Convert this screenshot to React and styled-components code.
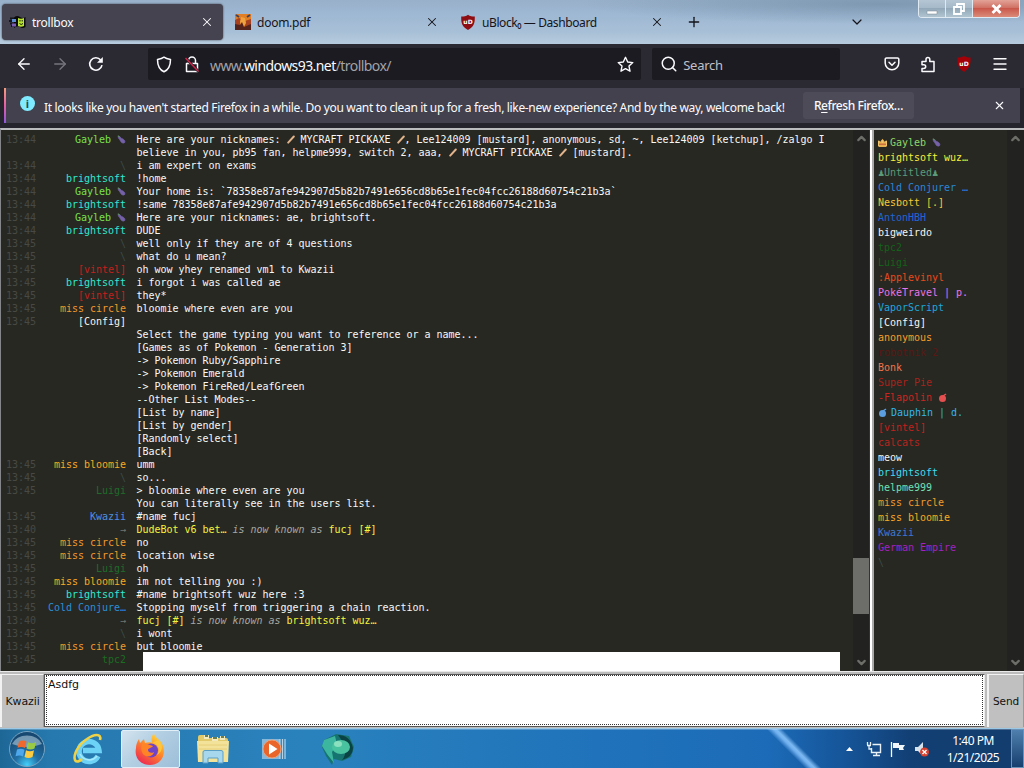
import React from 'react';
import styled, { createGlobalStyle, css } from 'styled-components';
import { ArrowLeft, ArrowRight, X, Plus, ChevronDown, ChevronUp, Search, Menu } from 'lucide-react';

const GlobalStyle = createGlobalStyle`
  * { box-sizing: border-box; }
  body {
    margin: 0;
    overflow: hidden;
    background: #2b2a33;
    font-family: "Noto Sans", "Open Sans", sans-serif;
  }
`;

const Screen = styled.div`
  width: 1024px;
  height: 768px;
  display: flex;
  flex-direction: column;
  overflow: hidden;
`;

/* ---------- tab strip ---------- */

const TabStrip = styled.div`
  height: 44px;
  display: flex;
  align-items: flex-start;
  padding: 4px 0 0 2px;
  background:
    radial-gradient(ellipse 300px 20px at 880px 4px, rgba(112, 139, 165, 0.65), transparent),
    linear-gradient(180deg, #98b0ca 0, #9fb8d3 35%, #a9c1d7 75%, #b7cbdd 100%);
`;

const Tab = styled.div`
  width: ${p => p.$width}px;
  height: 36px;
  flex: none;
  display: flex;
  align-items: center;
  padding: 0 9px 0 ${p => p.$pad || 7}px;
  margin-right: ${p => p.$gap || 0}px;
  border-radius: 4px;
  color: #15141a;
  ${p => p.$active && css`
    color: #fbfbfe;
    background: #45434f;
    box-shadow: 0 0 2px #33323c;
  `}
`;

const TabTitle = styled.span`
  flex: 1;
  margin-left: 6px;
  padding-top: 1px;
  font-size: 12px;
  letter-spacing: ${p => p.$ls || 0}px;
  white-space: nowrap;
`;

const StripIcon = styled.div`
  width: 16px;
  height: 36px;
  display: flex;
  align-items: center;
  justify-content: center;
  margin-left: ${p => p.$left}px;
  color: #15141a;
`;

const WindowButtons = styled.div`
  display: flex;
  width: 102px;
  height: 18px;
  margin: -4px 0 0 53px;
  border: 1px solid #dfe9f1;
  border-top: none;
  border-radius: 0 0 4px 4px;
  overflow: hidden;
`;

const WindowButton = styled.div`
  flex: none;
  width: ${p => p.$width}px;
  display: flex;
  align-items: center;
  justify-content: center;
  border-right: 1px solid #dfe9f1;
  background: ${p => p.$close
    ? 'linear-gradient(180deg, #e3a297 0, #d07265 45%, #c9584a 50%, #dc8b7a 100%)'
    : 'linear-gradient(180deg, #b5c5d3 0, #a6bac9 45%, #93a9b9 50%, #b0c4d0 100%)'};
`;

/* ---------- navigation bar ---------- */

const NavBar = styled.div`
  height: 44px;
  display: flex;
  align-items: center;
  padding: 0 15px 4px 15px;
  background: #2b2a33;
  color: #fbfbfe;
`;

const NavIcon = styled.div`
  width: 18px;
  height: 18px;
  flex: none;
  display: flex;
  align-items: center;
  justify-content: center;
  margin-right: ${p => p.$gap || 0}px;
  color: ${p => (p.$dim ? '#77767e' : '#fbfbfe')};
`;

const UrlField = styled.div`
  width: 494px;
  height: 32px;
  display: flex;
  align-items: center;
  padding: 0 7px;
  margin: 0 11px 0 43px;
  border-radius: 2px;
  background: #1c1b22;
`;

const Url = styled.span`
  flex: 1;
  margin-left: 9px;
  padding-top: 2px;
  font-size: 14px;
  letter-spacing: -0.57px;
  color: #a3a3a8;
  b { font-weight: 400; color: #fbfbfe; }
`;

const SearchField = styled.div`
  width: 188px;
  height: 32px;
  display: flex;
  align-items: center;
  padding-left: 8px;
  margin-right: 43px;
  border-radius: 2px;
  background: #1c1b22;
  color: #fbfbfe;
  span {
    margin-left: 5px;
    padding-top: 2px;
    font-size: 13px;
    letter-spacing: -0.3px;
    color: #c1c0c7;
  }
`;

/* ---------- notification ---------- */

const NoticeRow = styled.div`
  height: 40px;
  padding: 0 4px 5px 4px;
  background: #25242c;
`;

const Notice = styled.div`
  height: 35px;
  display: flex;
  align-items: center;
  padding-left: 14px;
  border-left: 2px solid;
  border-image: linear-gradient(180deg, #f5a07a, #e45fa4 50%, #8a55e0) 1;
  background: #42414d;
  color: #fbfbfe;
`;

const InfoDot = styled.div`
  width: 15px;
  height: 15px;
  flex: none;
  display: flex;
  align-items: center;
  justify-content: center;
  margin: -4px 9px 0 0;
  border-radius: 50%;
  background: #80ebff;
  color: #254a5c;
  font-size: 11px;
  font-weight: 700;
`;

const NoticeText = styled.span`
  width: 745px;
  flex: none;
  margin-right: 14px;
  padding-top: 3px;
  font-size: 12px;
  letter-spacing: -0.335px;
  white-space: nowrap;
`;

const RefreshButton = styled.div`
  width: 111px;
  height: 27px;
  flex: none;
  margin-right: 79px;
  border-radius: 3px;
  background: #4c4b57;
  font-size: 12px;
  font-weight: 500;
  line-height: 28px;
  letter-spacing: -0.42px;
  text-align: center;
  u { text-underline-offset: 2px; }
`;

/* ---------- chat ---------- */

const ChatArea = styled.div`
  height: 543px;
  display: flex;
  border-top: 2px solid #b9bbbd;
  border-left: 1px solid #84868a;
  background: #272822;
  font-family: "DejaVu Sans Mono", "Liberation Mono", monospace;
  font-size: 10px;
  letter-spacing: -0.02px;
  color: #f8f8f4;
`;

const Messages = styled.div`
  width: 852px;
  padding: 3px 0 0 5px;
  overflow: hidden;
`;

const Line = styled.div`
  height: 13px;
  display: flex;
  line-height: 13px;
  white-space: pre;
`;

const Time = styled.span`
  width: 31px;
  color: #484943;
`;

const Nick = styled.span`
  width: 89px;
  margin-right: 10.5px;
  display: flex;
  justify-content: flex-end;
  align-items: center;
  color: ${p => p.$color};
`;

const Yellow = styled.span`
  color: #f5f23c;
`;

const Em = styled.i`
  color: #a7a7a0;
`;

const HiddenMessage = styled.div`
  width: 697px;
  height: 19px;
  margin: -1px 0 0 6.5px;
  background: #fff;
`;

const Scrollbar = styled.div`
  width: ${p => p.$width}px;
  flex: none;
  display: flex;
  flex-direction: column;
  align-items: center;
  justify-content: space-between;
  padding: 2px 0 2px;
  background: #222320;
  color: #6d6e69;
`;

const Thumb = styled.div`
  width: 100%;
  height: 56px;
  flex: none;
  margin: 413px 0 auto;
  background: #6d6e6a;
`;

const UserList = styled.div`
  flex: 1;
  display: flex;
  flex-direction: column;
  padding: 5px 0 0 4px;
`;

const Divider = styled.div`
  width: 5px;
  background: linear-gradient(90deg, #33342f 0 1px, #fff 1px 3px, #aaa 3px 5px);
`;

const User = styled.div`
  height: 15px;
  display: flex;
  align-items: center;
  white-space: pre;
  line-height: 15px;
  color: ${p => p.$color};
`;

/* ---------- input ---------- */

const InputRow = styled.div`
  height: 57px;
  display: flex;
  padding: 2px 0 1px;
  border-top: 1px solid #e8e8e8;
  background: #bcbcbc;
  font-family: "DejaVu Sans", sans-serif;
  color: #111;
`;

const GreyButton = styled.div`
  width: ${p => p.$width}px;
  display: flex;
  align-items: center;
  justify-content: center;
  border-left: 2px solid #f2f2f2;
  border-top: 1px solid #f2f2f2;
  border-right: 1px solid #999;
  background: #c0c0c0;
  font-size: ${p => p.$size}px;
  letter-spacing: -0.1px;
`;

const TextBox = styled.div`
  flex: 1;
  margin-right: 2px;
  border: 1px solid #555;
  border-right-color: #eee;
  padding: 0 1px 1px;
  background: #fff;
`;

const TextInner = styled.div`
  height: 100%;
  padding: 2px 1px;
  border: 1px dotted #333;
  font-size: 11px;
  line-height: 13px;
`;

/* ---------- taskbar ---------- */

const Taskbar = styled.div`
  height: 40px;
  display: flex;
  align-items: center;
  border-top: 1px solid #9cc8e6;
  box-shadow: inset 0 1px 0 rgba(255, 255, 255, 0.25);
  background:
    linear-gradient(45deg, transparent 0 44%, rgba(122, 184, 245, 0.9) 48.5%, rgba(135, 195, 250, 0.9) 50.5%, transparent 55%) 740px 0 / 110px 40px no-repeat,
    linear-gradient(90deg, #1d6796 0, #2679ae 5%, #2a82bd 30%, #2277bb 50%, #1c6bb8 75%, #155396 83%, #123f74 89%, #123d6d 100%);
`;

const TaskItem = styled.div`
  width: ${p => p.$width}px;
  height: 38px;
  flex: none;
  display: flex;
  align-items: center;
  justify-content: center;
  ${p => p.$active && css`
    border: 1px solid #e2eff7;
    border-radius: 2px;
    background: linear-gradient(135deg, #d3e3ef, #b2cee2 45%, #9dbfd9);
  `}
`;

const Tray = styled.div`
  flex: 1;
  display: flex;
  align-items: center;
  justify-content: flex-end;
`;

const Clock = styled.div`
  width: 66px;
  margin: 0 5px 0 5px;
  color: #fff;
  font-size: 12px;
  line-height: 17px;
  letter-spacing: -0.5px;
  text-align: center;
  white-space: nowrap;
`;

const ShowDesktop = styled.div`
  width: 13px;
  height: 39px;
  border: 1px solid #6b93b8;
  background: linear-gradient(180deg, #4f7fae, #163f6e);
`;

const Eggplant = () => (
  <svg width="9" height="9" viewBox="0 0 9 9">
    <path d="M1.400 1.600c1.600-.200 2.200.8 3 1.800 1.400.3 3 1.400 3.400 2.800.3 1.400-.8 2.200-2 1.800C4.400 7.600 3.500 6.200 3 4.900 2 4 1 3 1.400 1.600z" fill="#7461a8" stroke="#7461a8" strokeWidth=".8" />
    <path d="M.8.800l1.800 1.200" stroke="#5f8c68" strokeWidth="1.200" />
  </svg>
);

const Stick = () => (
  <svg width="8" height="9" viewBox="0 0 8 9" style={{ verticalAlign: '-1px' }}>
    <path d="M1.200 7.600L6.800 1.500" stroke="#e2b48c" strokeWidth="2" strokeLinecap="round" />
  </svg>
);

const UserIcon = styled.svg`
  flex: none;
  margin-right: ${p => p.$pull || 0}px;
`;

const Crown = () => (
  <UserIcon $pull={-3} width="9" height="10" viewBox="0 0 9 10">
    <path d="M.5 2l1.800 1.700L4.500.8l2.200 2.900L8.500 2v7h-8z" fill="#e8b04e" />
    <path d="M.5 3v5M8.500 3v5M4.500 2v3" stroke="#efc46a" strokeWidth="1.600" />
    <path d="M1 6.200h7" stroke="#c3563f" />
  </UserIcon>
);

const Berry = ({ color, pull }) => (
  <UserIcon $pull={pull} width="10" height="10" viewBox="0 0 10 10">
    <circle cx="4.500" cy="5.500" r="3.500" fill={color} />
    <path d="M5 3l3-2" stroke={color} strokeWidth="1.500" />
  </UserIcon>
);

const UblockShield = () => (
  <svg width="16" height="17" viewBox="0 0 16 17">
    <path d="M8 .8c2 1.500 4 1.700 6.800 1.700C15 9.500 13.600 13 8 16 2.400 13 1 9.500 1.200 2.500 4 2.500 6 2.300 8 .8z" fill="#8e0d12" />
    <text x="8" y="9.500" fill="#fff" fontSize="6" fontWeight="700" textAnchor="middle" fontFamily="DejaVu Sans">uD</text>
  </svg>
);

const WinFavicon = () => (
  <svg width="17" height="15" viewBox="0 0 17 15">
    <path d="M5 2.500Q8 0 11 2t5.500 0v10q-3 2-5.500 0T5 13z" fill="#0b0b0b" />
    <path d="M1 3.500h4M0 6h4M1 8.500h4M2 11h4" stroke="#15151b" strokeWidth="1.800" />
    <path d="M3 4h4v3H3z" fill="#5b8ed0" /><path d="M3 8.500h4v3H3z" fill="#7a5fb5" />
    <path d="M9 3q3 1.500 6 0v8q-3 1.500-6 0z" fill="#b8e332" />
    <path d="M11 5v1.500M13.200 5v1.500M10.500 8.500q1.500 2 3.500 0" stroke="#17220a" fill="none" />
  </svg>
);

const DoomFavicon = () => (
  <svg width="16" height="16" viewBox="0 0 16 16">
    <path d="M0 0h16v16H0z" fill="#a8411f" />
    <path d="M0 0h16v5L10 7 4 4 0 6z" fill="#e07f26" />
    <path d="M6 3l4 1 1 5-2 4H6l-1-5z" fill="#f0a23e" />
    <path d="M0 10l5 1 2-3 2 5 7-3v6H0z" fill="#54231b" />
    <path d="M1 1l3 2M12 3l3-2" stroke="#41415a" strokeWidth="2" />
  </svg>
);

const Reload = () => (
  <svg width="16" height="16" viewBox="0 0 16 16" fill="none" stroke="currentColor" strokeWidth="1.600">
    <path d="M14 9.200A6.200 6.200 0 1 1 12.700 4" />
    <path d="M14.800 1v5.800H9z" fill="currentColor" stroke="none" />
  </svg>
);

const Shield = () => (
  <svg width="16" height="17" viewBox="0 0 16 17" fill="none" stroke="#fbfbfe" strokeWidth="1.500">
    <path d="M8 1.200C6 2.600 4 3 1.500 3.400 1.500 9.500 3.200 13.500 8 15.800 12.800 13.500 14.500 9.500 14.500 3.400 12 3 10 2.600 8 1.200z" strokeLinejoin="round" />
  </svg>
);

const BrokenLock = () => (
  <svg width="16" height="17" viewBox="0 0 16 17" fill="none" stroke="#fbfbfe" strokeWidth="1.500">
    <path d="M4.500 7V4.500a3.500 3.500 0 0 1 7 0V7M2.500 7.500h11v8h-11z" strokeLinejoin="round" />
    <path d="M1.500 2l13 13.500" stroke="#1c1b22" strokeWidth="2.600" />
    <path d="M1.500 2l13 13.500" stroke="#c9284a" strokeWidth="1.500" />
  </svg>
);

const BookmarkStar = () => (
  <svg width="17" height="17" viewBox="0 0 17 17" fill="none" stroke="#fbfbfe" strokeWidth="1.400" strokeLinejoin="round">
    <path d="M8.500 1.300l2.200 4.700 5.100.6-3.800 3.500 1 5.100-4.500-2.500L4 15.200l1-5.100L1.200 6.600 6.300 6z" />
  </svg>
);

const Pocket = () => (
  <svg width="16" height="16" viewBox="0 0 16 16" fill="none" stroke="#fbfbfe" strokeWidth="1.500" strokeLinecap="round" strokeLinejoin="round">
    <path d="M2.500 2h11a1.300 1.300 0 0 1 1.300 1.300V7a6.800 6.800 0 0 1-13.600 0V3.300A1.300 1.300 0 0 1 2.500 2z" />
    <path d="M5 6.300l3 3 3-3" />
  </svg>
);

const Extension = () => (
  <svg width="16" height="17" viewBox="0 0 16 17" fill="none" stroke="#fbfbfe" strokeWidth="1.500" strokeLinejoin="round">
    <path d="M2 8V5.500h4V3.300a1.900 1.900 0 0 1 3.800 0v2.200H14v10H2v-3h1.800a1.900 1.900 0 0 0 0-3.800H2z" />
  </svg>
);

const UblockButton = () => (
  <svg width="18" height="18" viewBox="0 0 18 18">
    <path d="M9 1c2 1.400 4 1.500 6.500 1.600C16 9.500 14.500 13.500 9 17 3.500 13.500 2 9.500 2.500 2.600 5 2.500 7 2.400 9 1z" fill="#a30008" />
    <text x="9" y="10.500" fill="#fff" fontSize="6" fontWeight="700" textAnchor="middle" fontFamily="DejaVu Sans">uD</text>
  </svg>
);

const StartOrb = () => (
  <svg width="38" height="38" viewBox="0 0 38 38">
    <defs>
      <radialGradient id="orb" cx="50%" cy="95%" r="85%">
        <stop offset="0" stopColor="#43d0fa" /><stop offset=".4" stopColor="#216fa5" /><stop offset="1" stopColor="#174871" />
      </radialGradient>
    </defs>
    <circle cx="19" cy="19" r="17.500" fill="url(#orb)" stroke="#78a4c2" />
    <path d="M4 14a16 13 0 0 1 30 0q-15 6-30 0z" fill="#bfd7e4" opacity=".55" />
    <path d="M11 11.500q4-2 7.500 0L17 18q-3.500-2-7.500-.3z" fill="#ef692e" />
    <path d="M20 12.300q4 2 8-.3l-1.500 6.500q-4 2-8 0z" fill="#9acb45" />
    <path d="M9 19.500q4-1.800 7.500.2L15 26.500q-3.500-2-7.500-.2z" fill="#4fa8ec" />
    <path d="M18 20.300q4 2 8 0L24.500 27q-4 2-8 0z" fill="#fdcc40" />
  </svg>
);

const InternetExplorer = () => (
  <svg width="32" height="34" viewBox="0 0 32 34">
    <path d="M26 24A10 10 0 1 1 27 18.500H11" fill="none" stroke="#6cd2f6" strokeWidth="5.500" />
    <path d="M25 24A10 10 0 0 1 8 22" fill="none" stroke="#a7eaff" strokeWidth="1.500" />
    <path d="M28 8C30 1 22 2 15 7 6 13 1 23 3 28c1 3 5 1 7-1" fill="none" stroke="#efd247" strokeWidth="2.600" />
  </svg>
);

const Firefox = () => (
  <svg width="33" height="34" viewBox="0 0 33 34">
    <defs>
      <linearGradient id="fox" x1=".8" y1="0" x2=".2" y2="1">
        <stop offset="0" stopColor="#ffe33c" /><stop offset=".45" stopColor="#ff8a27" /><stop offset="1" stopColor="#ec2356" />
      </linearGradient>
    </defs>
    <path d="M20 1c0 4 4 5 7 9 7 10 1 23-11 23C6 33 0 25 2 16c0-3 1-6 3-9l1 4 4-4 1 4c3-1 6-1 7 0-1-4 0-8 2-10z" fill="url(#fox)" />
    <circle cx="17" cy="18.500" r="7" fill="#7143c7" />
    <path d="M8 12c5-1 7 1 11 2-1 2-5 2-5 4s3 4 6 2c-1 5-8 6-11 2-2-3-2-6-1-10z" fill="#ff8425" />
    <path d="M18 11c6 0 9 7 5 12 7-4 6-12 1-15z" fill="#ffc53c" />
  </svg>
);

const Explorer = () => (
  <svg width="34" height="32" viewBox="0 0 34 32">
    <path d="M2 4q0-2 2-2h7l2 3h17q2 0 2 2v21H2z" fill="#e2c969" />
    <path d="M8 2h5v4H8zM16 4h6v4h-6zM24 3h5v4h-5z" fill="#f3e9bf" />
    <path d="M9 3h3M17 5h4M25 4h3" stroke="#6b8051" strokeWidth="2" />
    <path d="M1 8h32l-1 21H2z" fill="#f3e39a" />
    <path d="M3 12h28M3 16h28" stroke="#e6ce78" />
    <path d="M7 30V19q0-1.500 2-1.500h16q2 0 2 1.500v11h-5v-5H12v5z" fill="#a7d7ed" stroke="#5b9fc5" />
  </svg>
);

const MediaPlayer = () => (
  <svg width="28" height="26" viewBox="0 0 28 26">
    <path d="M2 3h18v20H2z" fill="#86b8dc" /><path d="M20 3v20M22.500 3v20M25 3v20" stroke="#b8d5e8" strokeWidth="1.200" />
    <circle cx="12" cy="13" r="9" fill="#e9652a" stroke="#f0a173" />
    <path d="M9 7.500l8.500 5.500L9 18.500z" fill="#fff" />
  </svg>
);

const TealOrb = () => (
  <svg width="34" height="32" viewBox="0 0 34 32">
    <path d="M3 7L15 1l13 2 5 11-3 10-9 4-8-2-2 6-6-9-4-9z" fill="#167470" />
    <path d="M3 7l11-4 2 8-5 8 2 11-7-9-5-8z" fill="#3cb69e" />
    <path d="M17 2q12 0 15 13 0 9-11 12 8-9-4-25z" fill="#0b4345" />
    <ellipse cx="20" cy="14" rx="9" ry="7" fill="#49c39f" />
    <ellipse cx="17" cy="11" rx="4" ry="3" fill="#8be0bf" />
  </svg>
);

const TrayIcons = () => (
  <svg width="92" height="20" viewBox="0 0 92 20">
    <path d="M3 12l3.500-4 3.500 4z" fill="#fff" />
    <g fill="none" stroke="#e8f1f8">
      <path d="M29.500 5.500h8v8h-9V9M30 16.500h7M33.500 14v2" strokeWidth="1.400" />
      <path d="M24.500 3v3M27.500 3v3M24 6.500h4M26 7v3h2" strokeWidth="1.300" />
    </g>
    <path d="M48.500 3v15" stroke="#fff" strokeWidth="1.300" />
    <path d="M50 4h6v2h6l-2 3 1 2h-5V9h-6z" fill="#f1f6fa" />
    <path d="M72 8h3l5-5v14l-5-5h-3z" fill="#d6e2ec" />
    <circle cx="81.500" cy="13" r="4.500" fill="#d7412f" />
    <path d="M79.500 11l4 4M83.500 11l-4 4" stroke="#fff" strokeWidth="1.400" />
  </svg>
);

const colors = {
  Gayleb: '#7be04b',
  brightsoft: '#2fe6d4',
  'miss circle': '#f09a2c',
  'miss bloomie': '#f7ab22',
  '[vintel]': '#c4201d',
  'Luigi': '#1f6b2b',
  'tpc2': '#1c6b22',
  'Kwazii': '#4d8fe0',
  'Cold Conjure…': '#2a8fd6',
  '[Config]': '#f4f4f0',
  '\\': '#3c4a45',
  '→': '#75766f',
};

const pickaxe = <><Stick /> MYCRAFT PICKAXE <Stick /></>;

const messages = [
  ['13:44', 'Gayleb', <>Here are your nicknames: {pickaxe}, Lee124009 [mustard], anonymous, sd, ~, Lee124009 [ketchup], /zalgo I</>],
  ['', '', <>believe in you, pb95 fan, helpme999, switch 2, aaa, {pickaxe} [mustard].</>],
  ['13:44', '\\', 'i am expert on exams'],
  ['13:44', 'brightsoft', '!home'],
  ['13:44', 'Gayleb', 'Your home is: `78358e87afe942907d5b82b7491e656cd8b65e1fec04fcc26188d60754c21b3a`'],
  ['13:44', 'brightsoft', '!same 78358e87afe942907d5b82b7491e656cd8b65e1fec04fcc26188d60754c21b3a'],
  ['13:44', 'Gayleb', 'Here are your nicknames: ae, brightsoft.'],
  ['13:44', 'brightsoft', 'DUDE'],
  ['13:45', '\\', 'well only if they are of 4 questions'],
  ['13:45', '\\', 'what do u mean?'],
  ['13:45', '[vintel]', 'oh wow yhey renamed vm1 to Kwazii'],
  ['13:45', 'brightsoft', 'i forgot i was called ae'],
  ['13:45', '[vintel]', 'they*'],
  ['13:45', 'miss circle', 'bloomie where even are you'],
  ['13:45', '[Config]', ''],
  ['', '', 'Select the game typing you want to reference or a name...'],
  ['', '', '[Games as of Pokemon - Generation 3]'],
  ['', '', '-> Pokemon Ruby/Sapphire'],
  ['', '', '-> Pokemon Emerald'],
  ['', '', '-> Pokemon FireRed/LeafGreen'],
  ['', '', '--Other List Modes--'],
  ['', '', '[List by name]'],
  ['', '', '[List by gender]'],
  ['', '', '[Randomly select]'],
  ['', '', '[Back]'],
  ['13:45', 'miss bloomie', 'umm'],
  ['13:45', '\\', 'so...'],
  ['13:45', 'Luigi', '> bloomie where even are you'],
  ['', '', 'You can literally see in the users list.'],
  ['13:45', 'Kwazii', '#name fucj'],
  ['13:40', '→', <><Yellow>DudeBot v6 bet…</Yellow> <Em>is now known as</Em> <Yellow>fucj [#]</Yellow></>],
  ['13:45', 'miss circle', 'no'],
  ['13:45', 'miss circle', 'location wise'],
  ['13:45', 'Luigi', 'oh'],
  ['13:45', 'miss bloomie', 'im not telling you :)'],
  ['13:45', 'brightsoft', '#name brightsoft wuz here :3'],
  ['13:45', 'Cold Conjure…', 'Stopping myself from triggering a chain reaction.'],
  ['13:40', '→', <><Yellow>fucj [#]</Yellow> <Em>is now known as</Em> <Yellow>brightsoft wuz…</Yellow></>],
  ['13:45', '\\', 'i wont'],
  ['13:45', 'miss circle', 'but bloomie'],
  ['13:45', 'tpc2', <HiddenMessage />],
];

const users = [
  ['#8fd66a', <><Crown /> Gayleb <Eggplant /></>],
  ['#f5ee3e', 'brightsoft wuz…'],
  ['#5c9b78', '♟Untitled♟'],
  ['#2b86d8', 'Cold Conjurer …'],
  ['#f7c935', 'Nesbott [.]'],
  ['#1f66d6', 'AntonHBH'],
  ['#f4f4f0', 'bigweirdo'],
  ['#14601a', 'tpc2'],
  ['#14601a', 'Luigi'],
  ['#e8481c', ':Applevinyl'],
  ['#e874e8', 'PokéTravel | p.'],
  ['#1fa5dc', 'VaporScript'],
  ['#f4f4f0', '[Config]'],
  ['#f59f2c', 'anonymous'],
  ['#5b1714', 'robotnik 2'],
  ['#f0764a', 'Bonk'],
  ['#a8231c', 'Super Pie'],
  ['#cc2420', <>-Flapolin <Berry color="#e4504f" /></>],
  ['#35b4ee', <><Berry color="#5b9fe0" pull={-3} /> Dauphin | d.</>],
  ['#c4201d', '[vintel]'],
  ['#b3261f', 'calcats'],
  ['#f4f4f0', 'meow'],
  ['#3fdcf0', 'brightsoft'],
  ['#6fe0b4', 'helpme999'],
  ['#f09a2c', 'miss circle'],
  ['#f7ab22', 'miss bloomie'],
  ['#3d78d0', 'Kwazii'],
  ['#a322c0', 'German Empire'],
  ['#3c4a45', '\\'],
];

function Browser() {
  return (
    <>
      <TabStrip>
        <Tab $active $width={221} $gap={4}>
          <WinFavicon />
          <TabTitle $ls={-0.25}>trollbox</TabTitle>
          <X size={14} strokeWidth={1.8} />
        </Tab>
        <Tab $width={221} $gap={5} $pad={8}>
          <DoomFavicon />
          <TabTitle $ls={-0.25}>doom.pdf</TabTitle>
          <X size={14} strokeWidth={1.8} />
        </Tab>
        <Tab $width={220}>
          <UblockShield />
          <TabTitle $ls={-0.4}>uBlock₀ — Dashboard</TabTitle>
          <X size={14} strokeWidth={1.8} />
        </Tab>
        <StripIcon $left={13}><Plus size={18} strokeWidth={2} /></StripIcon>
        <StripIcon $left={147}><ChevronDown size={20} strokeWidth={1.8} /></StripIcon>
        <WindowButtons>
          <WindowButton $width={27}>
            <svg width="12" height="12"><path d="M1 8h10v3H1z" fill="#fff" stroke="#7a8791" strokeWidth=".5" /></svg>
          </WindowButton>
          <WindowButton $width={27}>
            <svg width="12" height="12" fill="none" stroke="#fff" strokeWidth="1.8"><path d="M1 4h7v7H1zM4 3.500V1h7v7H8.500" /></svg>
          </WindowButton>
          <WindowButton $width={48} $close>
            <svg width="11" height="10"><path d="M1.500 1l8 8M9.500 1l-8 8" stroke="#fff" strokeWidth="2.800" /></svg>
          </WindowButton>
        </WindowButtons>
      </TabStrip>
      <NavBar>
        <NavIcon $gap={18}><ArrowLeft size={20} strokeWidth={1.8} /></NavIcon>
        <NavIcon $gap={18} $dim><ArrowRight size={20} strokeWidth={1.8} /></NavIcon>
        <NavIcon><Reload /></NavIcon>
        <UrlField>
          <NavIcon $gap={10}><Shield /></NavIcon>
          <NavIcon><BrokenLock /></NavIcon>
          <Url>www.<b>windows93.net</b>/trollbox/</Url>
          <BookmarkStar />
        </UrlField>
        <SearchField><Search size={18} strokeWidth={2} /><span>Search</span></SearchField>
        <NavIcon $gap={18}><Pocket /></NavIcon>
        <NavIcon $gap={18}><Extension /></NavIcon>
        <NavIcon $gap={18}><UblockButton /></NavIcon>
        <NavIcon><Menu size={18} strokeWidth={1.8} /></NavIcon>
      </NavBar>
      <NoticeRow>
        <Notice>
          <InfoDot>i</InfoDot>
          <NoticeText>It looks like you haven't started Firefox in a while. Do you want to clean it up for a fresh, like-new experience? And by the way, welcome back!</NoticeText>
          <RefreshButton>R<u>e</u>fresh Firefox…</RefreshButton>
          <X size={13} strokeWidth={2} />
        </Notice>
      </NoticeRow>
    </>
  );
}

function App() {
  return (
    <Screen>
      <GlobalStyle />
      <Browser />
      <ChatArea>
        <Messages>
          {messages.map(([time, nick, body], i) => (
            <Line key={i}>
              <Time>{time}</Time>
              <Nick $color={colors[nick]}>{nick}{nick === 'Gayleb' && <> <Eggplant /></>}</Nick>
              <span>{body}</span>
            </Line>
          ))}
        </Messages>
        <Scrollbar $width={16}>
          <ChevronUp size={13} strokeWidth={4} />
          <Thumb />
          <ChevronDown size={13} strokeWidth={4} />
        </Scrollbar>
        <Divider />
        <UserList>
          {users.map(([color, name], i) => <User key={i} $color={color}>{name}</User>)}
        </UserList>
        <Scrollbar $width={17}>
          <ChevronUp size={13} strokeWidth={4} />
          <ChevronDown size={13} strokeWidth={4} />
        </Scrollbar>
      </ChatArea>
      <InputRow>
        <GreyButton $width={44} $size={11}>Kwazii</GreyButton>
        <TextBox><TextInner>Asdfg</TextInner></TextBox>
        <GreyButton $width={37} $size={10.5}>Send</GreyButton>
      </InputRow>
      <Taskbar>
        <TaskItem $width={54}><StartOrb /></TaskItem>
        <TaskItem $width={67}><InternetExplorer /></TaskItem>
        <TaskItem $width={59} $active><Firefox /></TaskItem>
        <TaskItem $width={66}><Explorer /></TaskItem>
        <TaskItem $width={55}><MediaPlayer /></TaskItem>
        <TaskItem $width={73}><TealOrb /></TaskItem>
        <Tray>
          <TrayIcons />
          <Clock>1:40 PM<br />1/21/2025</Clock>
          <ShowDesktop />
        </Tray>
      </Taskbar>
    </Screen>
  );
}

export default App;
